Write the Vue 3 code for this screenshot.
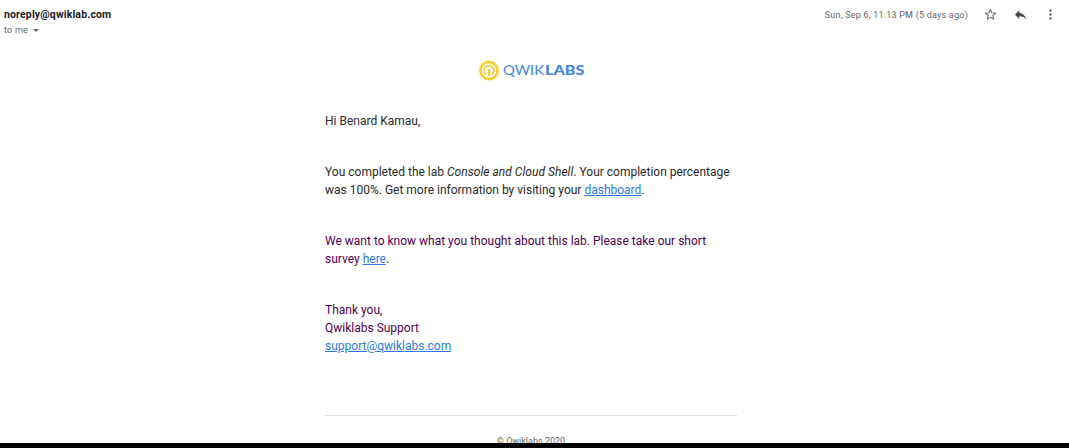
<script setup>
const year = 2020
</script>

<template>
  <div class="mail">
    <header class="head">
      <div class="from">
        <div class="sender">noreply@qwiklab.com</div>
        <div class="to">to me <i class="caret"></i></div>
      </div>
      <div class="meta">
        <span class="date">Sun, Sep 6, 11:13 PM (5 days ago)</span>
        <svg class="star" width="15" height="15" viewBox="0 0 24 24"><path d="M22 9.24l-7.19-.62L12 2 9.19 8.63 2 9.24l5.46 4.73L5.82 21 12 17.27 18.18 21l-1.63-7.03L22 9.24zM12 15.4l-3.76 2.27 1-4.28-3.32-2.88 4.38-.38L12 6.1l1.71 4.04 4.38.38-3.32 2.88 1 4.28L12 15.4z" /></svg>
        <svg class="reply" width="15" height="15" viewBox="0 0 24 24"><path d="M10 9V5l-7 7 7 7v-4.100c5 0 8.500 1.600 11 5.100-1-5-4-10-11-11z" /></svg>
        <svg class="more" width="15" height="15" viewBox="0 0 15 15"><path d="M6.500 2.500h2v2h-2zM6.500 6.500h2v2h-2zM6.500 10.500h2v2h-2z" /></svg>
      </div>
    </header>

    <main class="body">
      <svg class="logo" width="108" height="22" viewBox="0 0 108 22">
        <circle cx="11" cy="10.500" r="8.600" fill="none" stroke="#f7d02c" stroke-width="2.700" />
        <path d="M8.400 14.900A5 5 0 1 1 13.600 14.900" fill="none" stroke="#f7d02c" stroke-width="1.600" />
        <path d="M11 9V16" stroke="#f7d02c" stroke-width="2.400" />
        <text class="thin" x="25" y="15" textLength="41" lengthAdjust="spacingAndGlyphs">QWIK</text>
        <text class="thick" x="67" y="15" textLength="39.500" lengthAdjust="spacingAndGlyphs">LABS</text>
      </svg>

      <p class="greeting">Hi Benard Kamau,</p>
      <p>
        You completed the lab <em>Console and Cloud Shell</em>. Your completion percentage<br />
        was 100%. Get more information by visiting your <a>dashboard</a>.
      </p>
      <p class="quoted">
        We want to know what you thought about this lab. Please take our short<br />
        survey <a>here</a>.
      </p>
      <p class="quoted">
        Thank you,<br />
        Qwiklabs Support<br />
        <a>support@qwiklabs.com</a>
      </p>
      <footer class="foot">© Qwiklabs {{ year }}</footer>
    </main>
    <div class="edge"></div>
  </div>
</template>

<style>
body {
  margin: 0;
  background: #fff;
}
</style>

<style scoped>
.mail {
  position: relative;
  height: 448px;
  overflow: hidden;
  background: #fff;
  font-family: Roboto, "Liberation Sans", sans-serif;
  color: #2a2a2a;
}
.head {
  display: flex;
  justify-content: space-between;
  height: 60px;
  padding: 7px 11px 0 4px;
  box-sizing: border-box;
}
.sender {
  font-size: 10.500px;
  font-weight: 700;
  line-height: 15px;
  letter-spacing: 0.150px;
  color: #202124;
}
.to {
  display: flex;
  align-items: center;
  margin-top: 1px;
  font-size: 9px;
  line-height: 15px;
  letter-spacing: 0.225px;
  color: #5f6368;
}
.caret {
  margin: -1px 0 0 5px;
  border: 3px solid transparent;
  border-top-color: #666;
  border-bottom: 0;
}
.meta {
  display: flex;
  height: 15px;
  align-items: center;
}
.date {
  font-size: 9px;
  letter-spacing: 0.225px;
  color: #5f6368;
}
.meta svg {
  fill: #4a4a4a;
}
.meta .star {
  margin-left: 15px;
  fill: #666;
}
.reply,
.more {
  margin-left: 15px;
}
.body {
  width: 412px;
  margin-left: 325px;
}
.logo {
  display: block;
  margin-left: 153px;
}
.thin,
.thick {
  font-family: Lato, sans-serif;
  font-size: 14px;
  fill: #4285e0;
}
.thick {
  font-weight: 900;
}
p {
  margin: 0 0 33px;
  font-size: 12px;
  line-height: 18px;
  white-space: nowrap;
}
em {
  letter-spacing: 0.030px;
}
.greeting {
  margin-top: 30px;
}
.quoted {
  color: #500050;
}
a {
  color: #2b7bea;
  text-decoration: underline;
}
.foot {
  margin-top: 60px;
  padding-top: 18px;
  border-top: 1px solid #ddd;
  font-size: 9px;
  line-height: 15px;
  text-align: center;
  color: #666;
}
.edge {
  position: absolute;
  left: 0;
  right: 0;
  bottom: 0;
  height: 5px;
  background: #000;
}
</style>
